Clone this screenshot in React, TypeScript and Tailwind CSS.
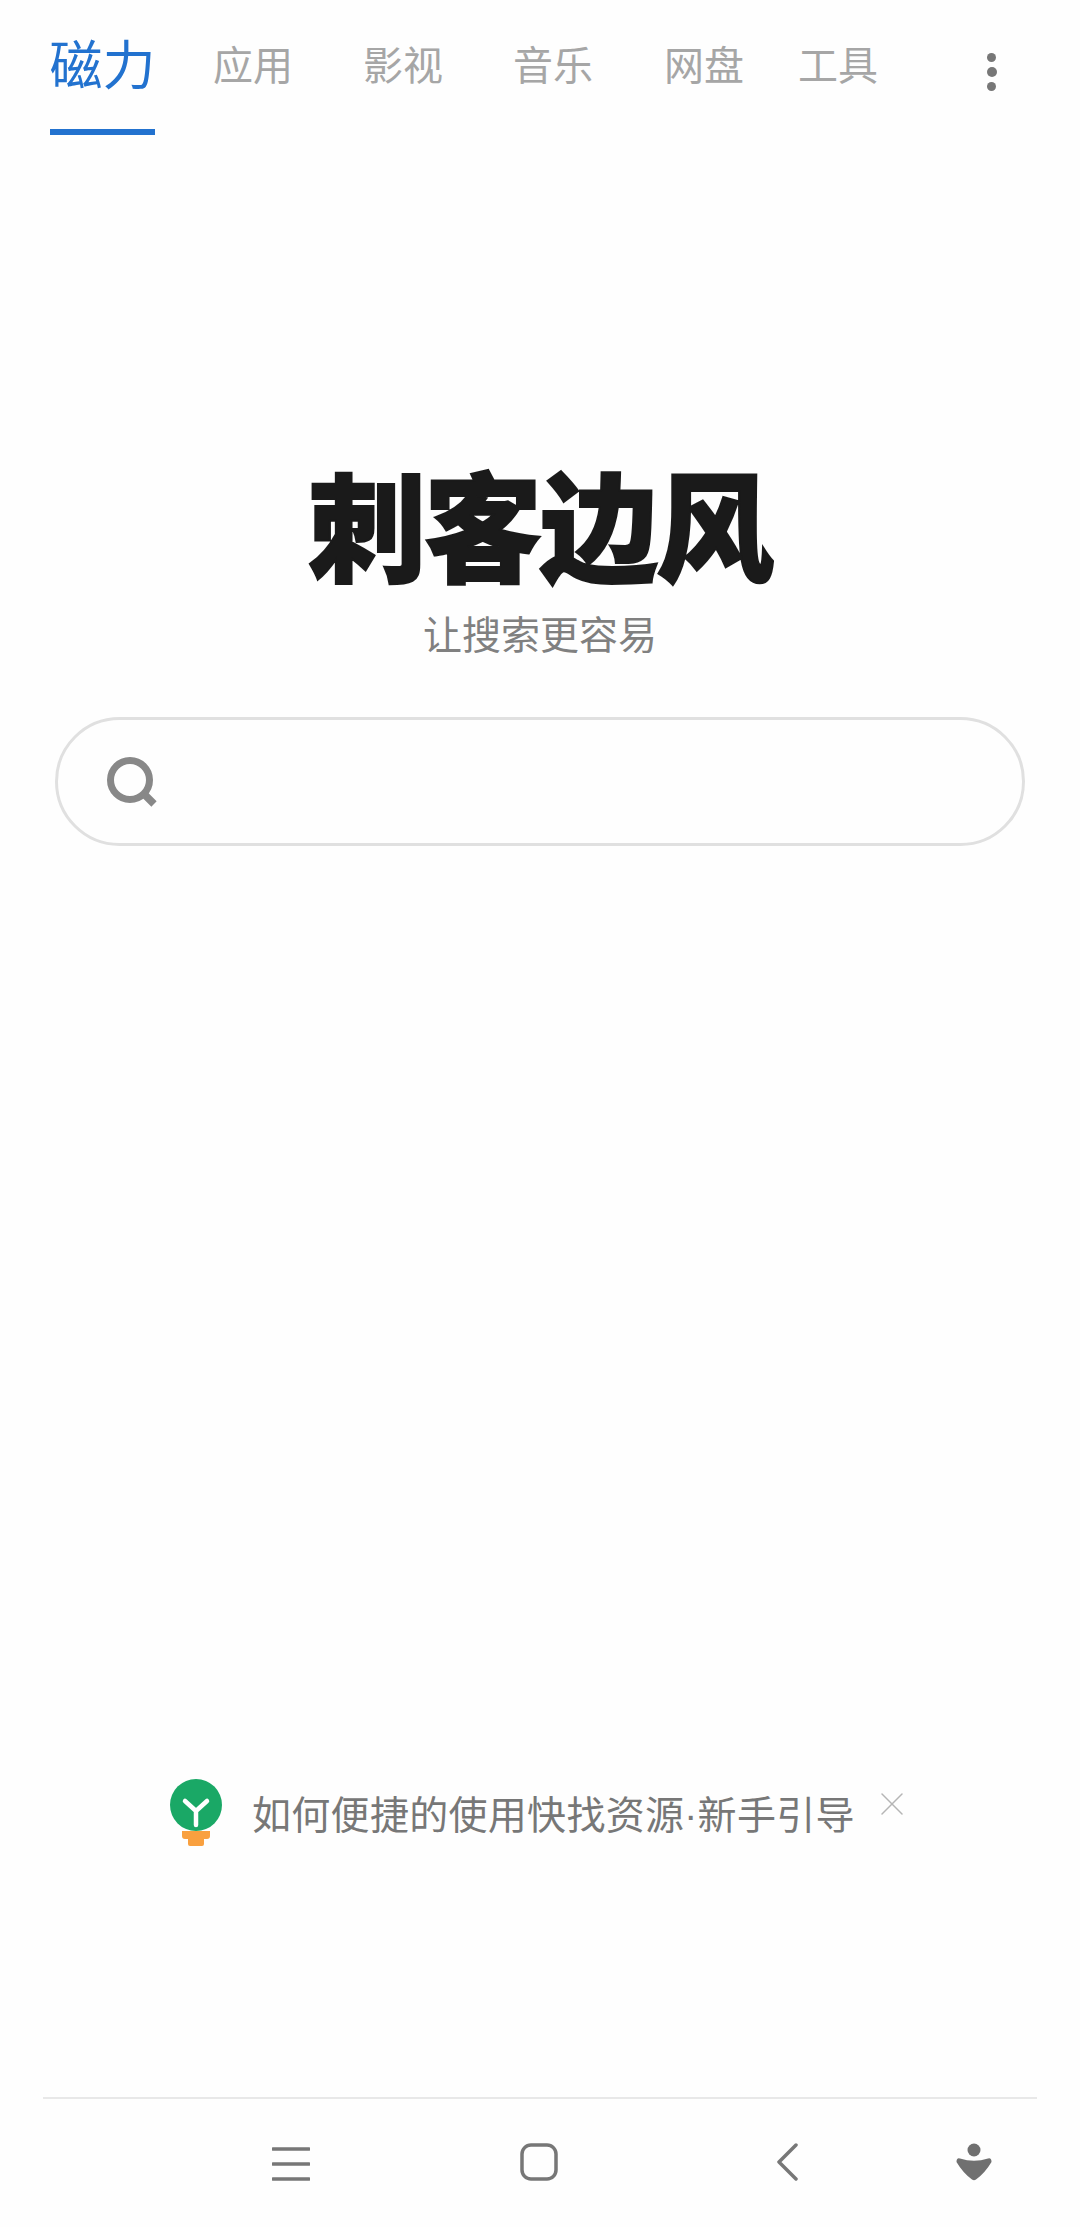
import { X } from "lucide-react";

const cjk = "font-['Noto_Sans_CJK_SC','Noto_Sans',sans-serif]";

const tabs = [
  { label: "应用", gap: "ml-[58px]" },
  { label: "影视", gap: "ml-[70px]" },
  { label: "音乐", gap: "ml-[70px]" },
  { label: "网盘", gap: "ml-[71px]" },
  { label: "工具", gap: "ml-[54px]" },
];

function TopTabs() {
  return (
    <div className="flex h-[135px] items-start pl-[50px]">
      <div className="flex h-[135px] w-[105px] flex-col items-center border-b-[6px] border-[#2272cf] pt-[27px]">
        <span className="whitespace-nowrap text-[53px] leading-[70px] text-[#2272cf]">磁力</span>
      </div>
      {tabs.map((tab) => (
        <span
          key={tab.label}
          className={`${tab.gap} mt-[34px] whitespace-nowrap text-[40px] leading-[58px] text-[#a6a6a6]`}
        >
          {tab.label}
        </span>
      ))}
      <div className="ml-[109px] mt-[53px] flex flex-col gap-[5px]">
        <span className="h-[9px] w-[9px] rounded-full bg-[#777777]" />
        <span className="h-[10px] w-[10px] rounded-full bg-[#777777]" />
        <span className="h-[9px] w-[9px] rounded-full bg-[#777777]" />
      </div>
    </div>
  );
}

function SearchBox() {
  return (
    <div className="mx-[55px] mt-[57px] flex h-[129px] items-center rounded-full border-[3px] border-[#e0e0e0] pl-[48px]">
      <svg width="52" height="52" viewBox="0 0 52 52" fill="none">
        <circle cx="24" cy="24" r="19.5" stroke="#888888" strokeWidth="7" />
        <path d="M38 38 L48 48" stroke="#888888" strokeWidth="7.5" />
      </svg>
    </div>
  );
}

function Bulb() {
  return (
    <svg width="52" height="68" viewBox="0 0 52 68" fill="none">
      <circle cx="26" cy="26" r="26" fill="#1aa866" />
      <path d="M15 22 L26 32 L37 22 M26 32 V46" stroke="#ffffff" strokeWidth="4.5" strokeLinecap="round" strokeLinejoin="round" />
      <path d="M12 52 H40 V57 Q40 60 37 60 H34 V65 Q34 67 32 67 H20 Q18 67 18 65 V60 H15 Q12 60 12 57 Z" fill="#f9a03f" />
    </svg>
  );
}

function Hint() {
  return (
    <div className="mt-[933px] flex h-[68px] items-start pl-[170px]">
      <Bulb />
      <span className="ml-[30px] mt-[8px] whitespace-nowrap text-[39px] leading-[50px] tracking-[0.3px] text-[#777777]">
        如何便捷的使用快找资源<span className="font-['Liberation_Sans',sans-serif]">·</span>新手引导
      </span>
      <X className="ml-[17px] mt-[5px] h-[40px] w-[40px] text-[#b5b5b5]" strokeWidth={0.9} />
    </div>
  );
}

function NavBar() {
  return (
    <div className="mx-[43px] mt-[250px] flex h-[130px] items-start border-t-2 border-[#e8e8e8] pl-[229px] pt-[44px]">
      <svg width="38" height="38" viewBox="0 0 38 38" className="mt-[3px]" fill="none">
        <path d="M1 3 H37 M1 18 H37 M1 33 H37" stroke="#777777" strokeWidth="3.5" strokeLinecap="round" />
      </svg>
      <svg width="38" height="38" viewBox="0 0 38 38" className="ml-[210px]" fill="none">
        <rect x="2" y="2" width="34" height="34" rx="9" stroke="#777777" strokeWidth="3.5" />
      </svg>
      <svg width="22" height="38" viewBox="0 0 22 38" className="ml-[218px]" fill="none">
        <path d="M20 2 L3 19 L20 36" stroke="#777777" strokeWidth="3.5" strokeLinecap="round" strokeLinejoin="round" />
      </svg>
      <svg width="36" height="38" viewBox="0 0 36 38" className="ml-[158px]" fill="none">
        <circle cx="18" cy="7" r="6.5" fill="#707070" />
        <path d="M4 15.5 Q18 20 32 15.5 Q35.5 14.5 35.5 19 Q29 30 20 36.5 Q18 38 16 36.5 Q7 30 0.5 19 Q0.5 14.5 4 15.5 Z" fill="#707070" />
      </svg>
    </div>
  );
}

export default function App() {
  return (
    <div className={`${cjk} h-[2227px] w-[1080px] overflow-hidden bg-[#fefefe]`}>
      <TopTabs />
      <div className="mt-[322px] flex flex-col items-center">
        <h1 className="whitespace-nowrap text-[118px] font-black leading-[130px] tracking-[-2px] text-[#1a1a1a] [-webkit-text-stroke:2px_#1a1a1a]">
          刺客边风
        </h1>
        <p className="mt-[17px] whitespace-nowrap text-[39px] leading-[56px] text-[#808080]">让搜索更容易</p>
      </div>
      <SearchBox />
      <Hint />
      <NavBar />
    </div>
  );
}
